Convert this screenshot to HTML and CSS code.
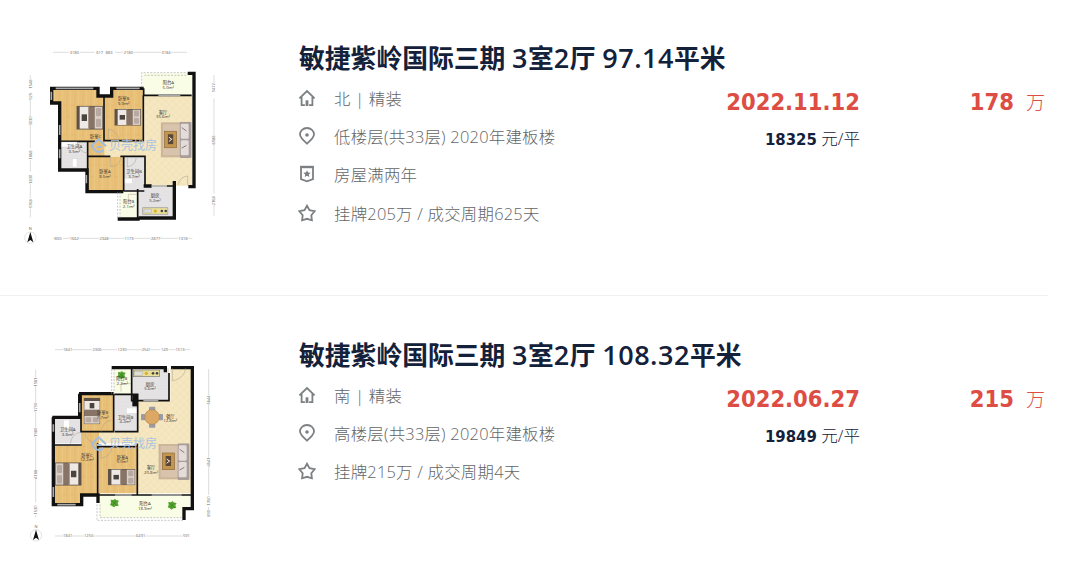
FILE: index.html
```
<!DOCTYPE html>
<html lang="zh-CN">
  <head>
    <meta charset="UTF-8" />
    <meta name="viewport" content="width=device-width, initial-scale=1.0" />
    <title>成交记录</title>
    <link rel="stylesheet" href="styles.css" />
  </head>

  <body>
    <svg class="defs" width="0" height="0">
      <defs>
        <pattern id="wood" width="24" height="90" patternUnits="userSpaceOnUse">
          <rect width="24" height="90" fill="#e9c078" />
          <path d="M12 0v90M0 30h12M12 65h12" stroke="#e0b163" stroke-width="1.5" />
          <path d="M23 0v90" stroke="#efcb88" stroke-width="2" />
        </pattern>
        <pattern id="stone" width="22" height="22" patternUnits="userSpaceOnUse">
          <rect width="22" height="22" fill="#f5e7c1" />
          <path d="M0 11L11 0L22 11L11 22Z" fill="none" stroke="#f1dfae" stroke-width="2" />
        </pattern>
        <pattern id="tile" width="10" height="10" patternUnits="userSpaceOnUse">
          <rect width="10" height="10" fill="#e5e3e4" />
          <path d="M0 0H10M0 0V10" stroke="#dcdadc" />
        </pattern>
        <symbol id="bed" viewBox="0 0 80 72" preserveAspectRatio="none">
          <rect width="80" height="72" fill="#5e5148" />
          <rect x="10" y="3" width="30" height="66" fill="#eee9e4" />
          <rect x="16" y="26" width="16" height="20" fill="#4b443d" />
          <rect x="36" y="3" width="19" height="66" fill="#887466" />
          <rect x="55" y="3" width="23" height="66" fill="#d8d0c9" />
          <rect x="59" y="7" width="15" height="25" rx="4" fill="#b8aaa0" />
          <rect x="59" y="39" width="15" height="25" rx="4" fill="#b8aaa0" />
        </symbol>
        <symbol id="sofa" viewBox="0 0 94 110">
          <rect y="2" width="76" height="106" fill="#cdb59a" />
          <rect x="7" y="8" width="62" height="94" fill="#d8c4ac" />
          <rect x="12" y="29" width="36" height="50" fill="#c39650" stroke="#8d6736" stroke-width="2" />
          <rect x="22" y="38" width="16" height="30" fill="#5a4632" />
          <path d="M25 60l10-8M25 47l8 6" stroke="#f4eee4" stroke-width="3" />
          <rect x="58" width="36" height="110" rx="4" fill="#a89d99" />
          <rect x="61" y="6" width="24" height="46" rx="4" fill="#e3dcd9" />
          <rect x="61" y="56" width="24" height="46" rx="4" fill="#e3dcd9" />
          <path d="M64 18l14 10M64 80l14-8" stroke="#8b7974" stroke-width="3" />
        </symbol>
        <symbol id="stove" viewBox="0 0 80 22">
          <rect x="1" y="1" width="78" height="20" fill="#eadf9a" stroke="#777" stroke-width="2" />
          <rect x="5" y="5" width="24" height="12" fill="#ddd" stroke="#999" />
          <circle cx="40" cy="11" r="5" fill="#d8b22d" />
          <circle cx="60" cy="11" r="4" fill="#444" />
          <circle cx="72" cy="11" r="4" fill="#444" />
        </symbol>
        <symbol id="plant" viewBox="0 0 30 30">
          <path d="M3 5l8 1 5-4 4 5 8 1-4 7 3 8-9 1-5 4-6-4-6-3 3-7z" fill="#58a433" />
          <path d="M7 8l15 15M22 7L8 22" stroke="#2f7d1d" stroke-width="2" />
        </symbol>
        <symbol id="compass" viewBox="0 0 40 56">
          <text x="20" y="13" class="plan_dim">N</text>
          <circle cx="20" cy="36" r="17" fill="none" stroke="#d5d5d5" stroke-width="2" />
          <path d="M20 19l9 31-9-7-9 7z" fill="#111" />
        </symbol>
        <symbol id="mark" viewBox="0 0 210 50">
          <path d="M8 28L31 7l22 21M14 25a18 18 0 0 0 31 14M25 30h15" fill="none" stroke="#9fbde0" stroke-width="6" />
          <text x="62" y="39" class="plan_mark">贝壳找房</text>
        </symbol>

        <symbol id="icon_house" viewBox="0 0 18 18">
          <path d="M1.4 9.4L9 2l7.600 7.400M3.600 8v8.200h3.300M14.400 8v8.200h-3.300" />
          <path d="M9 11.300v5.700" stroke-width="2.800" />
        </symbol>
        <symbol id="icon_pin" viewBox="0 0 18 18">
          <path d="M9 16.700C5 13.100 2 10.400 2 7.500a7 6.500 0 0 1 14 0c0 2.900-3 5.600-7 9.200z" />
          <circle cx="9" cy="8" r="1.800" class="solid" />
        </symbol>
        <symbol id="icon_badge" viewBox="0 0 18 18">
          <path d="M3 2.200h12v12L9 16.400l-6-2.200z" />
          <path d="M2.200 2h13.600" stroke-width="2.400" />
          <path d="M9 5.200l1.100 2.300 2.600.3-1.900 1.700.5 2.500L9 10.800 6.700 12l.5-2.500-1.900-1.700 2.600-.3z" class="solid" />
        </symbol>
        <symbol id="icon_star" viewBox="0 0 18 18">
          <path d="M9 1.700l2.500 4.500 5.100 1-3.300 4 .6 5.100L9 14.800l-4.900 1.500.6-5.100-3.300-4 5.100-1z" />
        </symbol>
      </defs>
    </svg>

    <ul class="list">
      <li class="item">
        <svg class="plan" viewBox="0 0 645 645">
          <!-- floors -->
          <path d="M112 162H250V187H265V318H135V204H112Z" fill="url(#wood)" />
          <path d="M268 187H292V162H385V315H268Z" fill="url(#wood)" />
          <path d="M388 182H532V452H388V365H220V318H388Z" fill="url(#stone)" />
          <path d="M220 318H268V365H220Z" fill="url(#wood)" />
          <path d="M382 114H532V180H388V158H382Z" fill="#fafde6" />
          <path d="M137 320H217V401H137Z" fill="url(#tile)" />
          <path d="M218 365H325V468H218Z" fill="url(#wood)" />
          <path d="M327 365H388V468H327Z" fill="url(#tile)" />
          <path d="M370 453H480V545H370Z" fill="url(#tile)" />
          <path d="M316 470H368V550H316Z" fill="#fafde6" />

          <!-- walls -->
          <path d="M105 160H249V183H290V160H386M110 158V204H134V405H216V470H325M518 115H537V455H520" class="wall" />
          <path d="M478 438V549H370M308 552H374M386 453H410" class="wall" />
          <path d="M325 468H388M386 160V181H530M267 186V317H385V181M135 319H240M218 319V468M218 364H286M316 364H390V455M326 364V468M368 462V550M455 453H478" class="wall thin" />
          <path d="M122 160H235M304 160H374M109 170V195M134 270V300M134 343V370M214 420V445M430 181H496M410 453H455" class="window" />
          <path d="M380 157V113H516M388 121H516M308 472V548M315 472V548" class="rail" />
          <path d="M280 315V282Q304 286 312 312M286 366V394Q312 398 318 368M337 366V396Q360 392 364 368M490 450Q491 427 518 423V450M187 320Q191 352 217 354M340 493V478H366" class="door" />

          <!-- furniture -->
          <use href="#bed" x="184" y="212" width="80" height="72" />
          <use href="#bed" x="298" y="222" width="80" height="50" />
          <use href="#sofa" x="437" y="260" width="93" height="109" />
          <use href="#stove" x="382" y="517" width="78" height="22" />
          <rect x="140" y="321" width="46" height="15" fill="#fff" stroke="#bbb" />
          <rect x="172" y="371" width="14" height="25" fill="#fff" stroke="#ccc" />
          <rect x="330" y="430" width="22" height="16" fill="#fff" stroke="#ccc" />
          <use href="#mark" x="220" y="306" width="210" height="50" />

          <!-- room labels -->
          <g class="plan_text">
            <text x="242" y="309">卧室C</text>
            <text x="326" y="195">卧室B</text><text x="326" y="209">9.9m²</text>
            <text x="460" y="147">阳台A</text><text x="460" y="161">5.0m²</text>
            <text x="444" y="236">客厅</text><text x="444" y="250">35.6m²</text>
            <text x="178" y="340">卫生间A</text><text x="178" y="354">3.5m²</text>
            <text x="270" y="414">卧室A</text><text x="270" y="428">8.5m²</text>
            <text x="357" y="414">卫生间B</text><text x="357" y="428">3.7m²</text>
            <text x="420" y="487">厨房</text><text x="420" y="501">5.2m²</text>
            <text x="341" y="505">阳台B</text><text x="341" y="519">2.1m²</text>
          </g>

          <!-- dimensions -->
          <path d="M114 52H162M194 52H238M300 52H325M354 52H438M468 52H516M114 610H120M144 610H164M191 610H253M281 610H328M356 610H408M436 610H490M519 610H532M46 120V132M46 194V245M46 272V340M46 375V410M46 448V490M46 521V547M597 120V150M597 190V300M597 325V475M597 510V542" class="dim_line" />
          <g class="plan_dim">
            <text x="178" y="56">3180</text><text x="254" y="56">617</text><text x="282" y="56">883</text>
            <text x="340" y="56">2180</text><text x="453" y="56">3184</text>
            <text x="129" y="614">830</text><text x="178" y="614">1662</text><text x="267" y="614">2348</text>
            <text x="342" y="614">1173</text><text x="422" y="614">2877</text><text x="504" y="614">1318</text>
            <text transform="translate(50 147) rotate(-90)">1548</text>
            <text transform="translate(50 184) rotate(-90)">929</text>
            <text transform="translate(50 258) rotate(-90)">3030</text>
            <text transform="translate(50 360) rotate(-90)">1868</text>
            <text transform="translate(50 433) rotate(-90)">1830</text>
            <text transform="translate(50 506) rotate(-90)">1768</text>
            <text transform="translate(601 158) rotate(-90)">1477</text>
            <text transform="translate(601 315) rotate(-90)">6988</text>
            <text transform="translate(601 497) rotate(-90)">2168</text>
          </g>
          <use href="#compass" x="26" y="572" width="40" height="56" />
        </svg>

        <div class="info">
          <h2 class="title">敏捷紫岭国际三期 <span>3</span>室<span>2</span>厅 <span>97.14</span>平米</h2>
          <div class="row">
            <ul class="details">
              <li><svg class="icon"><use href="#icon_house" /></svg><span>北 | 精装</span></li>
              <li><svg class="icon"><use href="#icon_pin" /></svg><span>低楼层(共33层) 2020年建板楼</span></li>
              <li><svg class="icon"><use href="#icon_badge" /></svg><span>房屋满两年</span></li>
              <li><svg class="icon"><use href="#icon_star" /></svg><span>挂牌205万 / 成交周期625天</span></li>
            </ul>
            <div class="deal">
              <div class="deal_date">2022.11.12</div>
              <div class="unit_price"><b>18325</b> 元/平</div>
            </div>
            <div class="total_price"><b>178</b><span>万</span></div>
          </div>
        </div>
      </li>

      <li class="item">
        <svg class="plan" viewBox="0 0 645 645">
          <!-- floors -->
          <path d="M466 98H530V475H368V325H250V290H368V198H466Z" fill="url(#stone)" />
          <path d="M296 100H350V178H296Z" fill="#fafde6" />
          <path d="M350 100H462V197H350Z" fill="url(#tile)" />
          <path d="M198 180H296V290H198Z" fill="url(#wood)" />
          <path d="M298 180H368V290H298Z" fill="url(#tile)" />
          <path d="M120 252H198V325H120Z" fill="url(#tile)" />
          <path d="M120 332H198V290H252V325H248V478H200V505H120Z" fill="url(#wood)" />
          <path d="M250 336H366V475H250Z" fill="url(#wood)" />
          <path d="M254 477H526V518H505V548H254Z" fill="#fafde6" />

          <!-- walls -->
          <path d="M290 98H451V112M468 98H532V521H507V555M192 176H296M194 176V247H112M115 247V509H200V480H249V504" class="wall" />
          <path d="M462 114V197H350V102M296 178V290H198V180M298 178H368V290H300M120 330H200M248 325V480H530M250 335H367V480M367 325V338" class="wall thin" />
          <path d="M360 180V214" stroke="#111" stroke-width="16" />
          <path d="M127 509H182M115 456V486M115 268V290M194 204V232M300 480H350M410 480H500M385 197H430" class="window" />
          <path d="M290 102V176M297 102V176M246 508V556H506M255 508V548H500" class="rail" />
          <path d="M472 100V138Q508 130 512 100M258 290Q262 260 288 256M208 292Q216 322 246 326M258 336V370Q286 366 290 338M318 170V146H348M166 326Q170 296 196 292" class="door" />

          <!-- furniture -->
          <g transform="translate(256 188) rotate(90)"><use href="#bed" width="80" height="50" /></g>
          <g transform="translate(200 452) rotate(180)"><use href="#bed" width="80" height="70" /></g>
          <use href="#bed" x="279" y="402" width="82" height="49" />
          <use href="#sofa" x="430" y="325" width="94" height="110" />
          <use href="#stove" x="353" y="104" width="82" height="22" />
          <use href="#plant" x="306" y="106" width="28" height="28" />
          <use href="#plant" x="284" y="489" width="30" height="30" />
          <use href="#plant" x="457" y="496" width="30" height="30" />
          <g fill="#9b9ba5">
            <rect x="402" y="215" width="19" height="12" rx="3" />
            <rect x="402" y="266" width="19" height="12" rx="3" />
            <rect x="378" y="237" width="13" height="19" rx="3" />
            <rect x="431" y="237" width="13" height="19" rx="3" />
          </g>
          <circle cx="411" cy="246" r="22" fill="#dba965" stroke="#b38548" stroke-width="2" />
          <rect x="147" y="256" width="15" height="25" fill="#fff" />
          <rect x="336" y="220" width="28" height="14" fill="#fff" />
          <use href="#mark" x="220" y="300" width="210" height="50" />

          <!-- room labels -->
          <g class="plan_text">
            <text x="320" y="136">阳台B</text><text x="322" y="150">2.2m²</text>
            <text x="405" y="152">厨房</text><text x="405" y="166">5.6m²</text>
            <text x="263" y="238">卧室B</text><text x="263" y="252">7.7m²</text>
            <text x="331" y="251">卫生间B</text><text x="331" y="265">4.2m²</text>
            <text x="466" y="248">餐厅</text><text x="466" y="262">12.8m²</text>
            <text x="158" y="288">卫生间A</text><text x="158" y="302">3.8m²</text>
            <text x="216" y="365">卧室C</text><text x="216" y="379">12.2m²</text>
            <text x="322" y="371">卧室A</text><text x="322" y="385">9.0m²</text>
            <text x="408" y="403">客厅</text><text x="408" y="417">20.8m²</text>
            <text x="390" y="511">阳台A</text><text x="390" y="525">18.9m²</text>
          </g>

          <!-- dimensions -->
          <path d="M120 44H144M171 44H232M260 44H306M335 44H380M408 44H436M460 44H482M508 44H526M120 603H145M171 603H207M235 603H363M391 603H503M62 104V128M62 153V204M62 230V278M62 306V405M62 430V502M62 540V548M581 102V181M581 208V368M581 394V480M581 516V525" class="dim_line" />
          <g class="plan_dim">
            <text x="158" y="48">1841</text><text x="246" y="48">2306</text><text x="321" y="48">1230</text>
            <text x="394" y="48">2541</text><text x="448" y="48">149</text><text x="495" y="48">1513</text>
            <text x="158" y="607">1841</text><text x="221" y="607">1250</text><text x="377" y="607">6491</text><text x="514" y="607">591</text>
            <text transform="translate(66 141) rotate(-90)">1981</text>
            <text transform="translate(66 217) rotate(-90)">1710</text>
            <text transform="translate(66 292) rotate(-90)">1980</text>
            <text transform="translate(66 418) rotate(-90)">4188</text>
            <text transform="translate(66 525) rotate(-90)">1530</text>
            <text transform="translate(585 195) rotate(-90)">5644</text>
            <text transform="translate(585 381) rotate(-90)">4541</text>
            <text transform="translate(585 498) rotate(-90)">1350</text>
            <text transform="translate(585 535) rotate(-90)">890</text>
          </g>
          <use href="#compass" x="43" y="565" width="40" height="56" />
        </svg>

        <div class="info">
          <h2 class="title">敏捷紫岭国际三期 <span>3</span>室<span>2</span>厅 <span>108.32</span>平米</h2>
          <div class="row">
            <ul class="details">
              <li><svg class="icon"><use href="#icon_house" /></svg><span>南 | 精装</span></li>
              <li><svg class="icon"><use href="#icon_pin" /></svg><span>高楼层(共33层) 2020年建板楼</span></li>
              <li><svg class="icon"><use href="#icon_star" /></svg><span>挂牌215万 / 成交周期4天</span></li>
            </ul>
            <div class="deal">
              <div class="deal_date">2022.06.27</div>
              <div class="unit_price"><b>19849</b> 元/平</div>
            </div>
            <div class="total_price"><b>215</b><span>万</span></div>
          </div>
        </div>
      </li>
    </ul>
  </body>
</html>
```
FILE: styles.css
```
body {
  margin: 0;
  background-color: #fff;
  color: #626566;
  font-family: "Open Sans", "Noto Sans CJK SC", sans-serif;
  overflow: hidden;
}

ul {
  list-style: none;
  margin: 0;
  padding: 0;
}

.defs {
  display: block;
}

.list {
  width: 1048px;
}

.item {
  display: flex;
  box-sizing: border-box;
  height: 296px;
  padding: 35px 0 0 15px;
  border-bottom: 1px solid #f0f0f0;
}

.item + .item {
  padding-top: 39px;
  border-bottom: none;
}

.item + .item .info {
  margin-top: -3px;
}

.plan {
  flex: none;
  width: 215px;
  height: 215px;
}

.info {
  flex: 1;
  margin-left: 69px;
}

.title {
  margin: 4px 0 0;
  color: #14213a;
  font-size: 25.8px;
  font-weight: 700;
  line-height: 38px;
  white-space: nowrap;
}

.title span {
  font-weight: 600;
  letter-spacing: 0.5px;
  font-size: 27px;
}

.row {
  display: flex;
}

.details {
  width: 340px;
  padding-top: 2px;
}

.details li {
  display: flex;
  align-items: center;
  height: 38.2px;
  font-size: 16.4px;
  font-weight: 300;
  letter-spacing: 0.25px;
  white-space: nowrap;
}

.icon {
  width: 18px;
  height: 18px;
  margin: 0 18px 0 -1px;
  fill: none;
  stroke: #7c8082;
  stroke-width: 1.8;
}

.solid {
  fill: #7c8082;
  stroke: none;
}

.deal {
  width: 221px;
  padding-top: 7px;
  text-align: right;
}

.deal b,
.deal_date,
.total_price b {
  font-family: "DejaVu Sans Condensed", "DejaVu Sans", sans-serif;
  font-stretch: condensed;
  font-weight: 700;
}

.deal_date {
  color: #dd4d43;
  font-size: 23.5px;
  line-height: 36px;
}

.unit_price {
  color: #14213a;
  font-size: 16.6px;
  font-weight: 300;
  line-height: 38px;
}

.total_price {
  display: flex;
  flex: 1;
  align-items: baseline;
  justify-content: flex-end;
  gap: 12px;
  padding: 7px 3px 0 0;
  color: #dd4d43;
  font-size: 23.5px;
  line-height: 36px;
}

.total_price span {
  font-size: 19px;
  font-weight: 300;
}

/* floor plans */
.wall {
  fill: none;
  stroke: #111;
  stroke-width: 10;
}

.thin {
  stroke-width: 5;
}

.window {
  fill: none;
  stroke: #aaa;
  stroke-width: 5;
}

.rail {
  fill: none;
  stroke: #aaa;
  stroke-width: 2;
  stroke-dasharray: 6 4;
}

.door {
  fill: none;
  stroke: #a99f8f;
  stroke-width: 1.5;
}

.dim_line {
  fill: none;
  stroke: #bbb;
  stroke-width: 1.5;
}

.plan_text {
  fill: #3b3630;
  font-size: 13px;
  text-anchor: middle;
}

.plan_dim {
  fill: #666;
  font-size: 12px;
  text-anchor: middle;
}

.plan_mark {
  fill: #a9c3e2;
  font-size: 36px;
}
```
